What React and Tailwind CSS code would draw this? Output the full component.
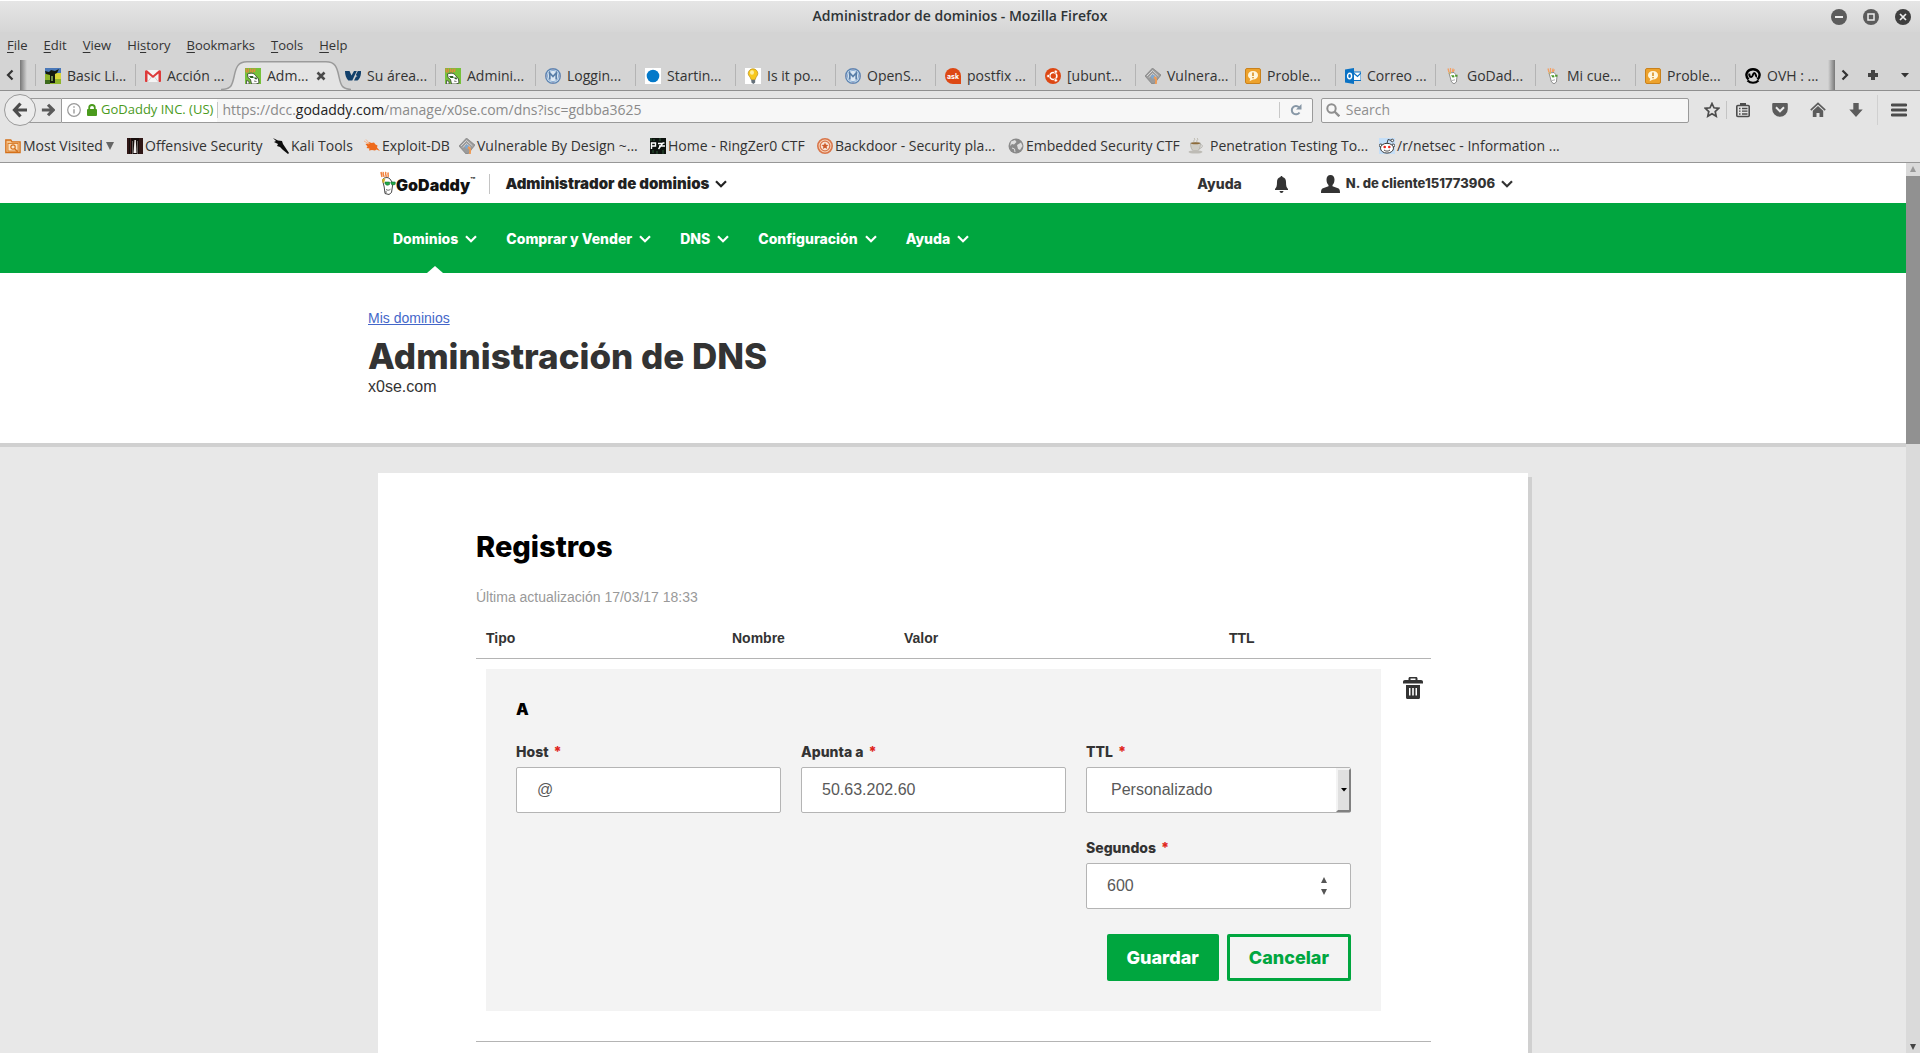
import React from 'react';

/* ---------- favicons ---------- */
const Svg = ({ children, className = 'size-4' }) => (
  <svg viewBox="0 0 16 16" className={`${className} shrink-0`} aria-hidden="true">{children}</svg>
);

const CowIcon = () => (
  <Svg>
    <rect width="16" height="16" fill="#4a78b8" />
    <path d="M0 6h16v10H0z" fill="#8fb52c" />
    <path d="M9 5h7v6H9z" fill="#d9d63a" />
    <path d="M0 3l4 1 2-2 4 1 4-2-2 4-2 1v9H5V7L1 6z" fill="#14180f" />
    <path d="M6 8h2v5H6z" fill="#6f8f4a" />
    <path d="M0 12h5v4H0z" fill="#3d6b1d" />
  </Svg>
);
const GmailIcon = () => (
  <Svg>
    <rect y="2" width="16" height="12" rx="1" fill="#f4f4f4" />
    <path d="M0 3.500C0 2 1.500 2 2 2.300L8 7.500l6-5.200c.5-.3 2-.3 2 1.200V13c0 .6-.4 1-1 1h-1.500V5.500L8 10 2.500 5.500V14H1c-.6 0-1-.4-1-1z" fill="#dd3b3b" />
    <path d="M2.500 14L6.500 9M13.500 14l-4-5" stroke="#d0d0d0" />
  </Svg>
);
const DaddyGreenIcon = () => (
  <Svg>
    <rect width="16" height="16" fill="#76c13a" />
    <path d="M1 .5l.5 4M3.500.5l-.5 4M5.500.5l.5 4M8 .5l-.5 4M10 .5L9.500 4" stroke="#f0803c" strokeWidth="1.200" />
    <path d="M2.500 6C6 4.500 9 5 10.500 7.500L13.500 11l.5 4-3 1H6.500L5.500 11.500 3 9.500z" fill="#fff" stroke="#3a4a32" strokeWidth=".9" />
    <path d="M4 8h4l.8 2H5.500zM9.300 9.200l2.700.5-.3 1.800-2-.4z" fill="#2d5d23" />
    <path d="M1.500 12.500l2.500 1v2.500H1.500zM9 13l2.500.5" fill="#fff" stroke="#333" strokeWidth=".7" />
  </Svg>
);
const OvhIcon = () => (
  <Svg>
    <path d="M0 3h4.500l2 4.500L9 3h2.800L7.300 12.500H3.300C1 10 0 7 0 3zM12.800 3H16c.3 4-1 7.500-3.500 9.500H9l2-4h1.500L10.800 7z" fill="#12406b" />
  </Svg>
);
const MetaIcon = () => (
  <Svg>
    <circle cx="8" cy="8" r="7.300" fill="#dce8f3" stroke="#5e86b3" strokeWidth="1.400" />
    <circle cx="8" cy="8" r="5.600" fill="none" stroke="#8fb0d4" strokeWidth="1" />
    <path d="M4.800 11.500V5L8 8.500 11.200 5v6.500" fill="none" stroke="#5a7fa8" strokeWidth="1.700" />
    <path d="M8 0v2M8 14v2M0 8h2M14 8h2" stroke="#8888aa" />
  </Svg>
);
const DotIcon = () => (
  <Svg>
    <rect width="16" height="16" fill="#fff" />
    <circle cx="8" cy="8" r="6.300" fill="#0479c9" />
  </Svg>
);
const BulbIcon = () => (
  <Svg>
    <rect width="16" height="16" fill="#fff" />
    <path d="M8 .8a4.800 4.800 0 0 1 4.800 4.800C12.800 8 10.500 9 10.300 11.500H6C5.800 9 3.200 8 3.200 5.600A4.800 4.800 0 0 1 8 .8z" fill="#f8c81c" stroke="#b48a14" strokeWidth=".7" />
    <ellipse cx="7" cy="4.500" rx="2" ry="2.300" fill="#fdeea0" />
    <path d="M6.200 12h4v2.500L8.500 16l-2-1.300z" fill="#66717a" />
  </Svg>
);
const AskIcon = () => (
  <Svg>
    <path d="M8 0a8 8 0 0 1 8 8v8H8A8 8 0 0 1 8 0z" fill="#dd4814" />
    <text x="8" y="10.500" fontSize="7" fontWeight="700" textAnchor="middle" fill="#fff" fontFamily="Inter, sans-serif">ask</text>
  </Svg>
);
const UbuntuIcon = () => (
  <Svg>
    <circle cx="8" cy="8" r="8" fill="#dd4814" />
    <circle cx="8.300" cy="8" r="3.500" fill="none" stroke="#fff" strokeWidth="1.700" />
    <g fill="#fff" stroke="#dd4814" strokeWidth=".6">
      <circle cx="3.300" cy="8" r="1.600" /><circle cx="10.800" cy="3.700" r="1.600" /><circle cx="10.800" cy="12.300" r="1.600" />
    </g>
  </Svg>
);
const VulnIcon = () => (
  <Svg>
    <path d="M7.500 0L16 7 9 16h-2L0 8z" fill="#9b9b9b" stroke="#777" strokeWidth=".6" />
    <path d="M2 8l5.500-5.500L13.500 8M4 9.500L7.500 5.500 11.500 9" fill="none" stroke="#dedede" strokeWidth=".9" />
    <circle cx="8" cy="8.800" r="2" fill="#7ea9d4" />
    <path d="M9 8.500c3 0 3.500 2 2.800 7.500H10c.5-4 .3-5.500-1.500-5.500z" fill="#f09a52" />
  </Svg>
);
const AlertIcon = () => (
  <Svg>
    <rect x=".5" y=".5" width="15" height="15" rx="1.500" fill="#eda22c" stroke="#c9811b" />
    <path d="M8 3c3 0 5 1.800 5 4.200s-2 4.200-5 4.200l-3.500 1.800.8-2.500C3.800 10 3 8.700 3 7.200 3 4.800 5 3 8 3z" fill="#fff6dc" />
    <path d="M8 4.500v3.500M8 8.900v1.300" stroke="#d98a15" strokeWidth="1.500" />
  </Svg>
);
const OutlookIcon = () => (
  <Svg>
    <path d="M8 4h8v8.500H8z" fill="#fff" stroke="#0a72c4" />
    <path d="M8.500 5l4 3.500L16 5" fill="none" stroke="#0a72c4" strokeWidth="1.200" />
    <path d="M0 1.500L9 0v16l-9-1.500z" fill="#0a72c4" />
    <ellipse cx="4.600" cy="8" rx="2" ry="2.700" fill="none" stroke="#fff" strokeWidth="1.400" />
  </Svg>
);
const DaddyIcon = () => (
  <Svg>
    <path d="M3 .5l1 4M5.500 0v4M8 .5l-.6 3.500M9.500 1.500L8 4" stroke="#f3a066" strokeWidth="1.300" />
    <path d="M4 5l5-.5 3 3.500-.6 6L9 15.800 6.500 14z" fill="#fff" stroke="#777" strokeWidth=".8" />
    <path d="M3.500 5l2.500-.7-.5 2z" fill="#e5c13a" />
    <path d="M6 7.200h3l.5 2-2 .3zM10 7l2.600-.3-.2 1.900-1.900.3z" fill="#4c9a2a" />
    <path d="M7 12.500l3-.7" stroke="#999" strokeWidth=".8" />
  </Svg>
);
const OvhBlackIcon = () => (
  <Svg>
    <path d="M3.500 11.500C-1 6.500 2.500 1.300 8 1.300s9 5.200 4.500 10.200" fill="none" stroke="#000" strokeWidth="2.400" />
    <path d="M4.200 5.500c0 2.200 1 3.500 2.200 3.500C8 9 7.700 5 9.300 5s1.200 3.500 2.700 3.800" fill="none" stroke="#000" strokeWidth="2" />
    <path d="M2.500 12.500c3 3 8 3 11 0" fill="none" stroke="#000" strokeWidth="2.200" />
  </Svg>
);

/* ---------- bookmark icons ---------- */
const FolderIcon = () => (
  <Svg>
    <path d="M.8 14.500V2h5l1.300 1.800h8V14.500z" fill="#f6c48c" stroke="#d4701a" strokeWidth="1.300" />
    <rect x="3" y="5.500" width="10" height="7.500" fill="#fbe3c4" stroke="#d4701a" strokeWidth=".8" />
    <circle cx="8" cy="9" r="2.200" fill="none" stroke="#d4701a" strokeWidth="1.200" />
    <path d="M9.700 10.700l3 3" stroke="#d4701a" strokeWidth="1.400" />
  </Svg>
);
const OffsecIcon = () => (
  <Svg>
    <rect width="16" height="16" fill="#170d0c" />
    <path d="M1 0v16M3.500 0v16M13 0v16M15 0v16" stroke="#4a2220" />
    <path d="M5.500 3v13M10.500 3v13" stroke="#8d8583" strokeWidth=".7" />
    <path d="M7.500 2h1.300l.7 13h-3z" fill="#f2efee" />
  </Svg>
);
const KaliIcon = () => (
  <Svg>
    <path d="M0 0l5 2.500 4 .5 1 3 2 3 4 6-1 1-5-4-3-3-3-1 1-2-4-2 2-1z" fill="#0c0c0c" />
  </Svg>
);
const ExploitIcon = () => (
  <Svg>
    <path d="M1.500 6l2-.5L5 4l2.500 1 2.500-.5 1.500 2 2 1-.5 2L16 13l-3.500-1.500-1.500 1-3-.5-3 .5.5-2-3-.5 1-1.500z" fill="#ee6a1c" />
    <path d="M0 3l5 3M2 1.500l3.500 4" stroke="#f6b58c" />
  </Svg>
);
const RingIcon = () => (
  <Svg>
    <rect width="16" height="16" fill="#0d120e" />
    <path d="M1 0v3M4 1v2M10 0v3M13 12v4M3 12v3M7 13v3" stroke="#2f5a38" />
    <path d="M1.500 11V5h4v3h-4M8 5.500h4.500L8.500 11M14.500 5h-2M9 8h6" fill="none" stroke="#fff" strokeWidth="1.400" />
  </Svg>
);
const BackdoorIcon = () => (
  <Svg>
    <circle cx="8" cy="8" r="7.200" fill="#f6d2b8" stroke="#d9764a" strokeWidth="1.600" />
    <circle cx="8" cy="8" r="4.800" fill="#f8e4d6" stroke="#d9764a" strokeWidth="1.200" />
    <path d="M8 4.500l1 2.300 2.500.2-1.900 1.600.6 2.400L8 9.700 5.800 11l.6-2.400L4.500 7 7 6.800z" fill="#cc5a2a" />
  </Svg>
);
const GlobeIcon = () => (
  <Svg>
    <circle cx="8" cy="8" r="7.500" fill="#8a8a8a" />
    <path d="M3 3.500l4-1.500 1.500 2L6 6.500 4 6 2 8zM9 7l4-2.500L14.500 8 12 12l-2-1z" fill="#dedede" />
    <path d="M4 10l2.500 1L7 14" stroke="#dedede" fill="none" />
  </Svg>
);
const CupIcon = () => (
  <Svg>
    <path d="M6 0c2 2-1 2 0 4M9 0c2 2-1 2 0 4" stroke="#b9b4a8" fill="none" />
    <path d="M2.500 5h10c0 4-1 7-3 8h-4c-2-1-3-4-3-8z" fill="#cfcdc6" stroke="#a8a69f" strokeWidth=".7" />
    <ellipse cx="7.500" cy="5.300" rx="4.500" ry="1" fill="#8d6b3a" />
    <path d="M12.500 6.500c3 0 2 4-1.300 4" fill="none" stroke="#b5b3ac" />
    <ellipse cx="7.500" cy="14" rx="7" ry="1.600" fill="#bdbbb5" />
  </Svg>
);
const RedditIcon = () => (
  <Svg>
    <rect width="16" height="16" fill="#c5dff8" />
    <circle cx="13.300" cy="2.500" r="1.300" fill="#fff" stroke="#222" strokeWidth=".8" />
    <path d="M8 5.500l1-4 3 .8" fill="none" stroke="#222" strokeWidth=".8" />
    <circle cx="1.800" cy="7.500" r="1.500" fill="#fff" stroke="#222" strokeWidth=".8" />
    <circle cx="14.200" cy="7.500" r="1.500" fill="#fff" stroke="#222" strokeWidth=".8" />
    <ellipse cx="8" cy="10.200" rx="6.500" ry="4.900" fill="#fff" stroke="#222" strokeWidth=".9" />
    <circle cx="5.700" cy="9" r="1.300" fill="#f0261c" /><circle cx="10.300" cy="9" r="1.300" fill="#f0261c" />
    <path d="M5 12c2 1.500 4 1.500 6 0" fill="none" stroke="#222" strokeWidth=".8" />
  </Svg>
);

/* ---------- window chrome ---------- */
const MENU = [
  ['', 'F', 'ile'], ['', 'E', 'dit'], ['', 'V', 'iew'], ['Hi', 's', 'tory'], ['', 'B', 'ookmarks'], ['', 'T', 'ools'], ['', 'H', 'elp'],
];
const TABS = [
  ['Basic Li...', CowIcon], ['Acción ...', GmailIcon], ['Adm...', DaddyGreenIcon, true], ['Su área...', OvhIcon],
  ['Admini...', DaddyGreenIcon], ['Loggin...', MetaIcon], ['Startin...', DotIcon], ['Is it po...', BulbIcon],
  ['OpenS...', MetaIcon], ['postfix ...', AskIcon], ['[ubunt...', UbuntuIcon], ['Vulnera...', VulnIcon],
  ['Proble...', AlertIcon], ['Correo ...', OutlookIcon], ['GoDad...', DaddyIcon], ['Mi cue...', DaddyIcon],
  ['Proble...', AlertIcon], ['OVH : ...', OvhBlackIcon],
];
const BOOKMARKS = [
  ['Most Visited', FolderIcon, 'w-[122px] gap-0.5'], ['Offensive Security', OffsecIcon, 'w-[146px] gap-0.5'], ['Kali Tools', KaliIcon, 'w-[91px] gap-0.5'],
  ['Exploit-DB', ExploitIcon, 'w-[95px] gap-0.5'], ['Vulnerable By Design ~...', VulnIcon, 'w-[191px] gap-0.5'], ['Home - RingZer0 CTF', RingIcon, 'w-[167px] gap-0.5'],
  ['Backdoor - Security pla...', BackdoorIcon, 'w-[191px] gap-0.5'], ['Embedded Security CTF', GlobeIcon, 'w-[180px] gap-0.5'],
  ['Penetration Testing To...', CupIcon, 'w-[191px] gap-1.5'], ['/r/netsec - Information ...', RedditIcon, 'w-[191px] gap-0.5'],
];

function TitleBar() {
  return (
    <header className="grid h-8 grid-cols-[1fr_auto_1fr] items-center border-t border-white bg-linear-to-b from-[#e5e5e5] to-[#d6d6d6]">
      <span />
      <h1 className="pb-0.5 text-sm font-semibold text-[#2e3436]">Administrador de dominios - Mozilla Firefox</h1>
      <div className="flex justify-end gap-4 pr-[9px]">
        <button aria-label="Minimizar"><Svg><circle cx="8" cy="8" r="8" fill="#5c5c5c" /><path d="M4 8h8" stroke="#eee" strokeWidth="2" /></Svg></button>
        <button aria-label="Maximizar"><Svg><circle cx="8" cy="8" r="8" fill="#5c5c5c" /><rect x="5" y="5" width="6" height="6" fill="none" stroke="#eee" strokeWidth="1.500" /></Svg></button>
        <button aria-label="Cerrar"><Svg><circle cx="8" cy="8" r="8" fill="#3f3f3f" /><path d="M5 5l6 6M11 5l-6 6" stroke="#eee" strokeWidth="1.700" /></Svg></button>
      </div>
    </header>
  );
}

function Tab({ label, Icon, active }) {
  return (
    <div role="tab" aria-selected={!!active} className="relative flex w-[100px] shrink-0 items-center pl-2.5 pt-px">
      {active && (
        <svg viewBox="0 0 130 30" className="absolute -left-[14px] top-px h-[30px] w-[130px] max-w-none" aria-hidden="true">
          <path d="M0 29.500C10 29 11 25 13 16 15 6 17 .8 26 .8h79c9 0 11 5 13 15 2 9 3 13 12 13.700V30H0z" fill="#e4e4e4" />
          <path d="M0 28.500C10 28 11 25 13 16 15 6 17 .8 26 .8h79c9 0 11 5 13 15 2 9 3 12 12 12.700" fill="none" stroke="#9b9b9b" strokeWidth="1.500" />
        </svg>
      )}
      <span className="relative flex w-full items-center gap-1.5">
        <Icon />
        <span className="whitespace-nowrap text-sm">{label}</span>
        {active && (
          <button aria-label="Cerrar pestaña" className="ml-auto mr-[9px]">
            <svg viewBox="0 0 10 10" className="size-2.5"><path d="M1.500 1.500l7 7M8.500 1.500l-7 7" stroke="#4a4a4a" strokeWidth="2.600" /></svg>
          </button>
        )}
      </span>
    </div>
  );
}

function TabStrip() {
  return (
    <div className="flex h-[31px] items-stretch border-b border-[#8f8f8f]">
      <div className="flex w-[35px] shrink-0 items-center">
        <button aria-label="Anterior" className="pl-1.5">
          <svg viewBox="0 0 8 12" className="h-3 w-2"><path d="M6.500 1.500L2 6l4.500 4.500" fill="none" stroke="#333" strokeWidth="2.200" /></svg>
        </button>
        <span className="ml-1.5 h-full w-[7px] bg-linear-to-r from-[#777] to-[#d4d4d4]" />
      </div>
      <div role="tablist" className="flex min-w-0 flex-1 overflow-hidden">
        {TABS.map(([label, Icon, active], i) => (
          <React.Fragment key={i}>
            <div className={i === 2 || i === 3 ? '-mr-px w-px shrink-0' : '-mr-px my-1 w-px shrink-0 bg-[#b4b4b4]'} />
            <Tab label={label} Icon={Icon} active={active} />
          </React.Fragment>
        ))}
      </div>
      <div className="flex w-[85px] shrink-0 items-center">
        <span className="-ml-[7px] h-full w-[7px] bg-linear-to-r from-transparent to-[#777]" />
        <button aria-label="Siguiente" className="ml-[6px]">
          <svg viewBox="0 0 8 12" className="h-3 w-2"><path d="M1.500 1.500L6 6l-4.500 4.500" fill="none" stroke="#333" strokeWidth="2.200" /></svg>
        </button>
        <button aria-label="Nueva pestaña" className="ml-[19px]">
          <svg viewBox="0 0 10 10" className="size-2.5"><path d="M5 0v10M0 5h10" stroke="#444" strokeWidth="4" /></svg>
        </button>
        <button aria-label="Todas las pestañas" className="ml-[23px]">
          <svg viewBox="0 0 8 5" className="h-[5px] w-2"><path d="M0 0h8L4 4.500z" fill="#333" /></svg>
        </button>
      </div>
    </div>
  );
}

function NavBar() {
  return (
    <div className="flex h-[39px] items-center pb-px pl-1">
      <button aria-label="Atrás" className="relative z-10 flex size-8 shrink-0 items-center justify-center rounded-full border border-[#9a9a9a] bg-[#ececec]">
        <Svg><path d="M8.500 1.500L2.500 8l6 6.500M3 8h12" fill="none" stroke="#4c4c4c" strokeWidth="3.200" /></Svg>
      </button>
      <button aria-label="Adelante" className="-ml-3 flex h-[25px] w-[37px] shrink-0 items-center border-y border-[#9a9a9a] bg-[#e8e8e8] pl-[17px]">
        <svg viewBox="0 0 16 16" className="size-3.5"><path d="M8 2l6 6-6 6M1 8h12" fill="none" stroke="#5a5a5a" strokeWidth="3.600" /></svg>
      </button>
      <div className="flex h-[25px] min-w-0 flex-[1256] items-center rounded-r-xs border border-[#9a9a9a] bg-[#f7f7f7]">
        <button className="flex h-full shrink-0 items-center bg-white pl-[5px] pr-1 text-[13px] text-[#4a9a1c]">
          <svg viewBox="0 0 16 16" className="size-3.5" aria-hidden="true"><circle cx="8" cy="8" r="7.200" fill="none" stroke="#9a9a9a" strokeWidth="1.400" /><path d="M8 7v5M8 3.800v1.700" stroke="#9a9a9a" strokeWidth="1.600" /></svg>
          <svg viewBox="0 0 10 12" className="ml-1.5 mr-1 h-3 w-2.5" aria-hidden="true"><path d="M2.200 6V3.800a2.800 2.800 0 0 1 5.600 0V6" fill="none" stroke="#4a9a1c" strokeWidth="1.800" /><rect y="5" width="10" height="7" rx="1" fill="#4a9a1c" /></svg>
          GoDaddy INC. (US)
        </button>
        <span className="h-4 w-px bg-[#c8c8c8]" />
        <div className="min-w-0 flex-1 truncate pl-1 text-sm text-[#8a8a8a]">
          https://dcc.<span className="text-[#222]">godaddy.com</span>/manage/x0se.com/dns?isc=gdbba3625
        </div>
        <span className="h-4 w-px bg-[#c8c8c8]" />
        <button aria-label="Recargar" className="flex w-8 justify-center">
          <svg viewBox="0 0 12 12" className="size-3"><path d="M9.500 8.500A4.200 4.200 0 1 1 9 3.200" fill="none" stroke="#8797a6" strokeWidth="2" /><path d="M11.500 0v5.500H6z" fill="#8797a6" /></svg>
        </button>
      </div>
      <label className="ml-2 flex h-[25px] min-w-0 flex-[364] items-center gap-1.5 rounded-xs border border-[#9a9a9a] bg-[#f7f7f7] pl-1">
        <svg viewBox="0 0 14 14" className="size-3.5 shrink-0" aria-hidden="true"><circle cx="5.500" cy="5.500" r="4.200" fill="none" stroke="#8f8f8f" strokeWidth="2" /><path d="M8.500 8.500l4.800 4.800" stroke="#8f8f8f" strokeWidth="2.400" /></svg>
        <input aria-label="Search" placeholder="Search" className="min-w-0 flex-1 bg-transparent text-sm outline-none placeholder:text-[#8f8f8f]" />
      </label>
      <button aria-label="Marcar" className="ml-2 flex w-[29px] shrink-0 justify-center">
        <Svg><path d="M8 1.500l2 4.300 4.700.5-3.500 3.200 1 4.700L8 11.800l-4.200 2.400 1-4.700L1.300 6.300 6 5.800z" fill="none" stroke="#4c4c4c" strokeWidth="1.700" /></Svg>
      </button>
      <span className="h-[18px] w-px bg-[#c4c4c4]" />
      <button aria-label="Marcadores" className="mr-0.5 flex w-8 shrink-0 justify-center">
        <Svg><rect x="1.800" y="3.500" width="12.400" height="11" rx="1" fill="none" stroke="#4c4c4c" strokeWidth="1.600" /><path d="M5 4V1h6v3z" fill="#4c4c4c" /><path d="M4 6.500h1.500M7 6.500h5.500M4 9.200h1.500M7 9.200h5.500M4 12h1.500M7 12h5.500" stroke="#4c4c4c" strokeWidth="1.300" /></Svg>
      </button>
      <button aria-label="Pocket" className="flex w-[38px] shrink-0 justify-center">
        <Svg><path d="M1.500 1h13c.8 0 1.300.5 1.300 1.300V7A7.800 7.800 0 0 1 .2 7V2.300C.2 1.500.7 1 1.500 1z" fill="#5c5c5c" /><path d="M4 5.300l4 4 4-4" fill="none" stroke="#ececec" strokeWidth="2" /></Svg>
      </button>
      <button aria-label="Inicio" className="flex w-[38px] shrink-0 justify-center">
        <Svg><path d="M.8 8.200L8 1.500l7.200 6.700" fill="none" stroke="#5c5c5c" strokeWidth="1.700" /><path d="M2.800 8.800L8 4l5.200 4.800V15H9.500v-4h-3v4H2.800z" fill="#5c5c5c" /></Svg>
      </button>
      <button aria-label="Descargas" className="flex w-[38px] shrink-0 justify-center">
        <Svg><path d="M5.300 1h5.400v6.500h4L8 15 1.300 7.500h4z" fill="#5c5c5c" /></Svg>
      </button>
      <span className="ml-0.5 h-[30px] w-px bg-[#d0d0d0]" />
      <button aria-label="Menú" className="flex w-[42px] shrink-0 justify-center">
        <Svg><path d="M1 3h14M1 8h14M1 13h14" stroke="#4c4c4c" strokeWidth="2.800" strokeLinecap="round" /></Svg>
      </button>
    </div>
  );
}

function BrowserChrome() {
  return (
    <div className="shrink-0 bg-[#d4d4d4] font-['Open_Sans',sans-serif] text-[#333]">
      <TitleBar />
      <nav aria-label="Menú" className="flex h-7 items-center gap-4 pl-[7px] text-[13px]">
        {MENU.map(([a, k, b]) => (
          <button key={k + b}>{a}<span className="underline underline-offset-2">{k}</span>{b}</button>
        ))}
      </nav>
      <TabStrip />
      <div className="border-b border-[#979797] bg-[#e4e4e4]">
        <NavBar />
        <nav aria-label="Marcadores" className="flex h-8 items-center overflow-hidden pl-[5px] text-sm">
          {BOOKMARKS.map(([label, Icon, size]) => (
            <a key={label} href="#" className={`flex shrink-0 items-center whitespace-nowrap ${size}`}>
              <Icon />
              {label}
              {label === 'Most Visited' && <svg viewBox="0 0 8 8" className="ml-px size-2"><path d="M0 0h8L4 8z" fill="#666" /></svg>}
            </a>
          ))}
        </nav>
      </div>
    </div>
  );
}

/* ---------- page ---------- */
const Chevron = ({ className = '' }) => (
  <svg viewBox="0 0 12 8" className={`h-2 w-3 shrink-0 ${className}`} aria-hidden="true">
    <path d="M1 1.200L6 6.200l5-5" fill="none" stroke="currentColor" strokeWidth="2.200" />
  </svg>
);

const Logo = () => (
  <a href="#" className="flex items-start text-[#111]">
    <svg viewBox="0 0 16 26" className="h-[26px] w-4" aria-hidden="true">
      <path d="M1 1l1 5M3.500 1c-1.500 2 1 3 .3 5M6 1c-1.500 2 .8 3 0 5M8.500 1.500C7 3 9 4 8 6" fill="none" stroke="#f0803c" strokeWidth="1.500" />
      <path d="M2.500 9C3 6.500 8 5.500 10 8l2 3 .5 4-1 6.500L9 23.500l-4-1-.8-6.500z" fill="#fff" stroke="#333" strokeWidth=".9" />
      <path d="M2 8l3.500-.5L4 12l-1.500-.5z" fill="#d8b331" />
      <path d="M5 11h4.500v2.500c-1.500 1-3.500 1-4.500-.8zM10.800 11h4.400v2.300c-1.500 1-3.500.7-4.200-.5z" fill="#1faa45" stroke="#1a6b30" strokeWidth=".6" />
      <path d="M6 18.500c1.500 1 3 1 4.500-.3M6 22v-2" fill="none" stroke="#444" strokeWidth=".8" />
    </svg>
    <span className="mt-1 text-base font-black leading-5">GoDaddy</span>
    <span className="mt-1 text-[8px] font-bold leading-[10px]">™</span>
  </a>
);

const SECTIONS = ['Dominios', 'Comprar y Vender', 'DNS', 'Configuración', 'Ayuda'];

function SiteHeader() {
  return (
    <header className="font-['Inter',sans-serif] font-bold">
      <div className="mx-auto flex h-10 max-w-[1170px] items-center pl-3 pr-[25px] pt-0.5 text-[#333]">
        <Logo />
        <span className="ml-3.5 mr-[15px] h-5 w-px bg-[#c4c4c4]" />
        <button className="flex items-center gap-1.5 text-[15px] font-black text-[#222]">Administrador de dominios <Chevron /></button>
        <div className="ml-auto flex items-center text-[13px] font-extrabold">
          <a href="#" className="text-sm">Ayuda</a>
          <button aria-label="Notificaciones" className="mx-[33px]">
            <svg viewBox="0 0 13 17" className="h-[17px] w-[13px]"><path d="M6.500 0c.7 0 1 .5 1 1 2.500.7 3.500 2.500 3.500 5 0 4 .5 5.500 2 7v1H0v-1c1.500-1.500 2-3 2-7 0-2.500 1-4.300 3.500-5 0-.5.3-1 1-1zM4.500 15h4c-.2 1.200-1 2-2 2s-1.800-.8-2-2z" fill="#333" /></svg>
          </button>
          <button className="flex items-center gap-1.5">
            <svg viewBox="0 0 19 18" className="h-[18px] w-[19px]" aria-hidden="true"><path d="M9.500 0C12 0 13.500 1.800 13.500 4.500c0 2.300-.7 4.300-2 5.500v1.300l5.500 2c1.500.6 2 1.700 2 4.700H0c0-3 .5-4.100 2-4.700l5.500-2V10c-1.300-1.200-2-3.200-2-5.500C5.500 1.800 7 0 9.500 0z" fill="#333" /></svg>
            N. de cliente151773906 <Chevron />
          </button>
        </div>
      </div>
      <div className="bg-[#00a63f] text-white">
        <nav className="mx-auto flex h-[70px] max-w-[1170px] gap-[29px] pl-[25px] text-sm font-extrabold">
          {SECTIONS.map((s, i) => (
            <button key={s} className="relative flex items-center gap-[7px] pt-0.5">
              {s} <Chevron />
              {i === 0 && <span className="absolute bottom-0 left-1/2 size-0 -translate-x-1/2 border-x-8 border-b-[7px] border-x-transparent border-b-white" />}
            </button>
          ))}
        </nav>
      </div>
    </header>
  );
}

const FIELD = 'h-[46px] w-full rounded-xs border border-[#b4b4b4] bg-white text-base text-[#595959] outline-none';

function Field({ id, label, className = '', children }) {
  return (
    <div className={`flex flex-col gap-[5px] ${className}`}>
      <label htmlFor={id} className="font-['Inter',sans-serif] text-sm font-extrabold leading-5">
        {label} <span className="ml-0.5 text-[#e0261c]">*</span>
      </label>
      <div className="relative">{children}</div>
    </div>
  );
}

function RecordForm() {
  return (
    <form className="bg-[#f3f3f3] p-[30px]">
      <h3 className="font-['Inter',sans-serif] text-base font-black leading-5 text-black">A</h3>
      <div className="mt-[23px] grid grid-cols-3 gap-x-5 gap-y-[25px]">
        <Field id="host" label="Host"><input id="host" defaultValue="@" className={`${FIELD} px-5`} /></Field>
        <Field id="target" label="Apunta a"><input id="target" defaultValue="50.63.202.60" className={`${FIELD} px-5`} /></Field>
        <Field id="ttl" label="TTL">
          <select id="ttl" className={`${FIELD} appearance-none px-6`} defaultValue="c"><option value="c">Personalizado</option></select>
          <span className="pointer-events-none absolute inset-y-px right-0 flex w-[15px] items-center justify-center rounded-r-xs border-2 border-[#f3f3f3] border-b-[#808080] border-r-[#808080] bg-[#e0e0e0]">
            <svg viewBox="0 0 6 4" className="h-1 w-1.5"><path d="M0 0h6L3 3.500z" fill="#000" /></svg>
          </span>
        </Field>
        <Field id="seconds" label="Segundos" className="col-start-3">
          <input id="seconds" type="number" defaultValue="600" className={`${FIELD} px-5 [appearance:textfield]`} />
          <svg viewBox="0 0 6 18" className="pointer-events-none absolute right-6 top-3.5 h-[18px] w-1.5"><path d="M3 0l3 6H0zM0 12h6l-3 6z" fill="#555" /></svg>
        </Field>
      </div>
      <div className="mt-[25px] flex justify-end gap-2 font-['Inter',sans-serif] text-lg font-extrabold">
        <button type="button" className="h-[47px] rounded-xs bg-[#00a63f] px-5 text-white">Guardar</button>
        <button type="button" className="h-[47px] rounded-xs border-3 border-[#00a63f] px-[19px] text-[#00a63f]">Cancelar</button>
      </div>
    </form>
  );
}

function Records() {
  return (
    <section className="mx-auto min-h-[600px] max-w-[1150px] bg-white pl-[98px] pr-[97px] pt-14 shadow-[4px_4px_0_#d0d0d0]">
      <h2 className="font-['Inter',sans-serif] text-[29px] font-extrabold leading-9 text-black">Registros</h2>
      <p className="mt-[22px] text-sm leading-5 text-[#999]">Última actualización 17/03/17 18:33</p>
      <table className="w-full table-fixed">
        <colgroup>
          <col className="w-[246px]" /><col className="w-[172px]" /><col className="w-[325px]" /><col /><col className="w-[50px]" />
        </colgroup>
        <thead>
          <tr className="border-b border-[#b4b4b4] text-left text-sm leading-5">
            {['Tipo', 'Nombre', 'Valor', 'TTL', ''].map((h, i) => <th key={i} className="px-2.5 pb-2.5 pt-[21px]">{h}</th>)}
          </tr>
        </thead>
        <tbody>
          <tr className="border-b border-[#b4b4b4] align-top">
            <td colSpan={4} className="pb-[30px] pl-2.5 pt-2.5"><RecordForm /></td>
            <td className="pt-[18px]">
              <button aria-label="Eliminar" className="ml-auto mr-2 block">
                <svg viewBox="0 0 20 22" className="h-[22px] w-5"><path d="M5.500 3V1.500C5.500.6 6 0 7 0h6c1 0 1.500.6 1.500 1.500V3H18c1.300 0 2 .8 2 2v1.500H0V5c0-1.200.7-2 2-2zM7.500 1.500V3h5V1.500z" fill="#333" fillRule="evenodd" /><path d="M3 8h14v12.500c0 .8-.5 1.500-1.500 1.500h-11C3.500 22 3 21.300 3 20.500zM6 11v7.500h1.500V11zM9.200 11v7.500h1.600V11zM12.500 11v7.500H14V11z" fill="#333" fillRule="evenodd" /></svg>
              </button>
            </td>
          </tr>
        </tbody>
      </table>
    </section>
  );
}

function Scrollbar() {
  return (
    <div className="flex w-3.5 shrink-0 flex-col items-center bg-[#dadada]" aria-hidden="true">
      <svg viewBox="0 0 14 13" className="h-[13px] w-3.5 shrink-0"><path d="M7 3l3 6H4z" fill="#999" /></svg>
      <div className="h-[268px] w-full bg-[#919191]" />
      <svg viewBox="0 0 14 13" className="mt-auto h-[13px] w-3.5 shrink-0"><path d="M7 10l3-6H4z" fill="#444" /></svg>
    </div>
  );
}

export default function App() {
  return (
    <div className="flex h-screen flex-col overflow-hidden">
      <BrowserChrome />
      <div className="flex min-h-0 flex-1">
        <div className="min-w-0 flex-1 overflow-hidden bg-[#e8e8e8] font-['Liberation_Sans',Arial,sans-serif] text-[#333]">
          <div className="bg-white"><SiteHeader /></div>
          <div className="border-b-4 border-[#d0d0d0] bg-white">
            <div className="mx-auto max-w-[1170px] pb-[45px] pt-[35px]">
              <a href="#" className="block w-fit text-sm leading-5 text-[#4467c9] underline">Mis dominios</a>
              <h1 className="mt-2 font-['Inter',sans-serif] text-[35px] font-extrabold leading-10">Administración de DNS</h1>
              <p className="text-base leading-[22px]">x0se.com</p>
            </div>
          </div>
          <main className="pt-[26px]"><Records /></main>
        </div>
        <Scrollbar />
      </div>
    </div>
  );
}
